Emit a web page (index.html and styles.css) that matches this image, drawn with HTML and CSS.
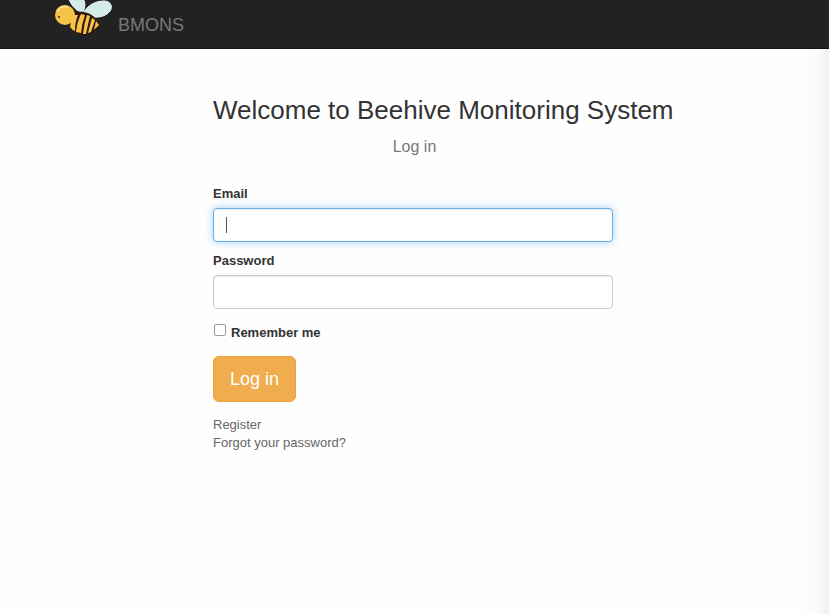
FILE: index.html
```html
<!DOCTYPE html>
<html lang="en">
<head>
<meta charset="utf-8">
<meta name="viewport" content="width=device-width, initial-scale=1">
<title>BMONS</title>
<link rel="stylesheet" href="styles.css">
</head>
<body>
<header class="navbar">
  <a class="brand" href="#">
    <svg class="bee" viewBox="0 0 58 36" width="58" height="36" aria-hidden="true">
      <path d="M28 13C21 10 16 4 14 -4H27C32 1 32 8 28 13Z" fill="#d3ebe9" stroke="#eef8f7"/>
      <path d="M29 14C33 5 42 1 50 1C57 1 59 7 56 11C51 18 39 19 29 14Z" fill="#d3ebe9" stroke="#eef8f7"/>
      <path d="M20 12C29 10 42 14 46 25C42 34 28 38 18 31C14 26 15 16 20 12Z" fill="#30180f"/>
      <path d="M20 15L24 15Q21 22 21 31Q18 30 16 27Q17 20 20 15Z" fill="#f6c248"/>
      <path d="M27 14L31 15Q28 23 27 33L22 32Q23 22 27 14Z" fill="#f6c248"/>
      <path d="M33 15L36 16Q34 24 32 34L29 34Q30 24 33 15Z" fill="#f6c248"/>
      <path d="M38 18L41 20Q39 26 37 32L34 33Q36 25 38 18Z" fill="#f6c248"/>
      <path d="M42 21L45 25L40 30Z" fill="#f6c248"/>
      <circle cx="11" cy="15" r="10" fill="#f6c248"/>
      <path d="M3 11Q7 5 14 7" fill="none" stroke="#fbda86" stroke-width="2"/>
      <circle cx="5" cy="17" r="1" fill="#30180f"/>
    </svg>
    <span>BMONS</span>
  </a>
</header>
<div class="page">
  <main class="login">
    <h1>Welcome to Beehive Monitoring System</h1>
    <p class="subtitle">Log in</p>
    <form>
      <label class="field-label" for="email">Email</label>
      <div class="field-wrap">
        <input class="field" id="email" type="text" autofocus>
      </div>
      <label class="field-label" for="password">Password</label>
      <div class="field-wrap">
        <input class="field" id="password" type="password">
      </div>
      <div class="remember">
        <input id="remember" type="checkbox">
        <label for="remember">Remember me</label>
      </div>
      <button class="submit" type="submit">Log in</button>
    </form>
    <nav class="links">
      <a href="#">Register</a>
      <a href="#">Forgot your password?</a>
    </nav>
  </main>
</div>
</body>
</html>
```
FILE: styles.css
```css
* { box-sizing: border-box; }

body {
  margin: 0;
  min-height: 100vh;
  display: flex;
  flex-direction: column;
  background: #fefefe;
  color: #333;
  font: 13px/18px "Liberation Sans", Arial, sans-serif;
}

.navbar {
  height: 49px;
  padding-left: 54px;
  background: #222;
  border-bottom: 1px solid #151212;
}

.brand {
  display: inline-flex;
  gap: 6px;
  color: #777;
  font-size: 18px;
  line-height: 50px;
  text-decoration: none;
}

.bee { display: block; }

.page {
  flex: 1;
  padding: 44px 12px 20px;
  background: linear-gradient(to left, #f0f0f0, #f9f9f9 10px, #fefefe 24px);
}

.login {
  max-width: 403px;
  margin: 0 auto;
}

h1 {
  margin: 0;
  font-size: 26px;
  font-weight: 400;
  line-height: 34px;
  white-space: nowrap;
}

.subtitle {
  margin: 10px 0 28px;
  color: #777;
  font-size: 16px;
  line-height: 20px;
  text-align: center;
}

form { max-width: 400px; }

.field-label {
  display: block;
  margin-bottom: 5px;
  font-weight: 700;
}

.field-wrap {
  position: relative;
  margin-bottom: 10px;
}

/* Steady text cursor in the focused, empty field */
.field-wrap:focus-within::after {
  content: "";
  position: absolute;
  top: 9px;
  left: 13px;
  width: 1px;
  height: 16px;
  background: #555;
}

.field {
  display: block;
  width: 100%;
  height: 34px;
  padding: 6px 12px;
  border: 1px solid #ccc;
  border-radius: 4px;
  background: #fff;
  color: #555;
  caret-color: transparent;
  font: 14px/20px "Liberation Sans", Arial, sans-serif;
  box-shadow: inset 0 1px 1px rgba(0, 0, 0, .075);
}

.field:focus {
  outline: 0;
  border-color: #66afe9;
  box-shadow: inset 0 1px 1px rgba(0, 0, 0, .075), 0 0 8px rgba(102, 175, 233, .6);
}

.remember {
  display: flex;
  align-items: flex-start;
  gap: 4px;
  margin: 15px 0 14px;
  font-weight: 700;
}

.remember input {
  appearance: none;
  width: 12px;
  height: 12px;
  margin: 0 1px;
  border: 1px solid #999;
  border-radius: 2px;
  background: #fff;
}

.remember input:checked { background: #66afe9; }

.submit {
  display: block;
  height: 46px;
  padding: 0 16px;
  border: 1px solid #eea236;
  border-radius: 6px;
  background: #f0ad4e;
  color: #fff;
  font: 18px/24px "Liberation Sans", Arial, sans-serif;
}

.links {
  display: flex;
  flex-direction: column;
  align-items: flex-start;
  margin-top: 14px;
}

.links a {
  color: #666;
  text-decoration: none;
}
```
